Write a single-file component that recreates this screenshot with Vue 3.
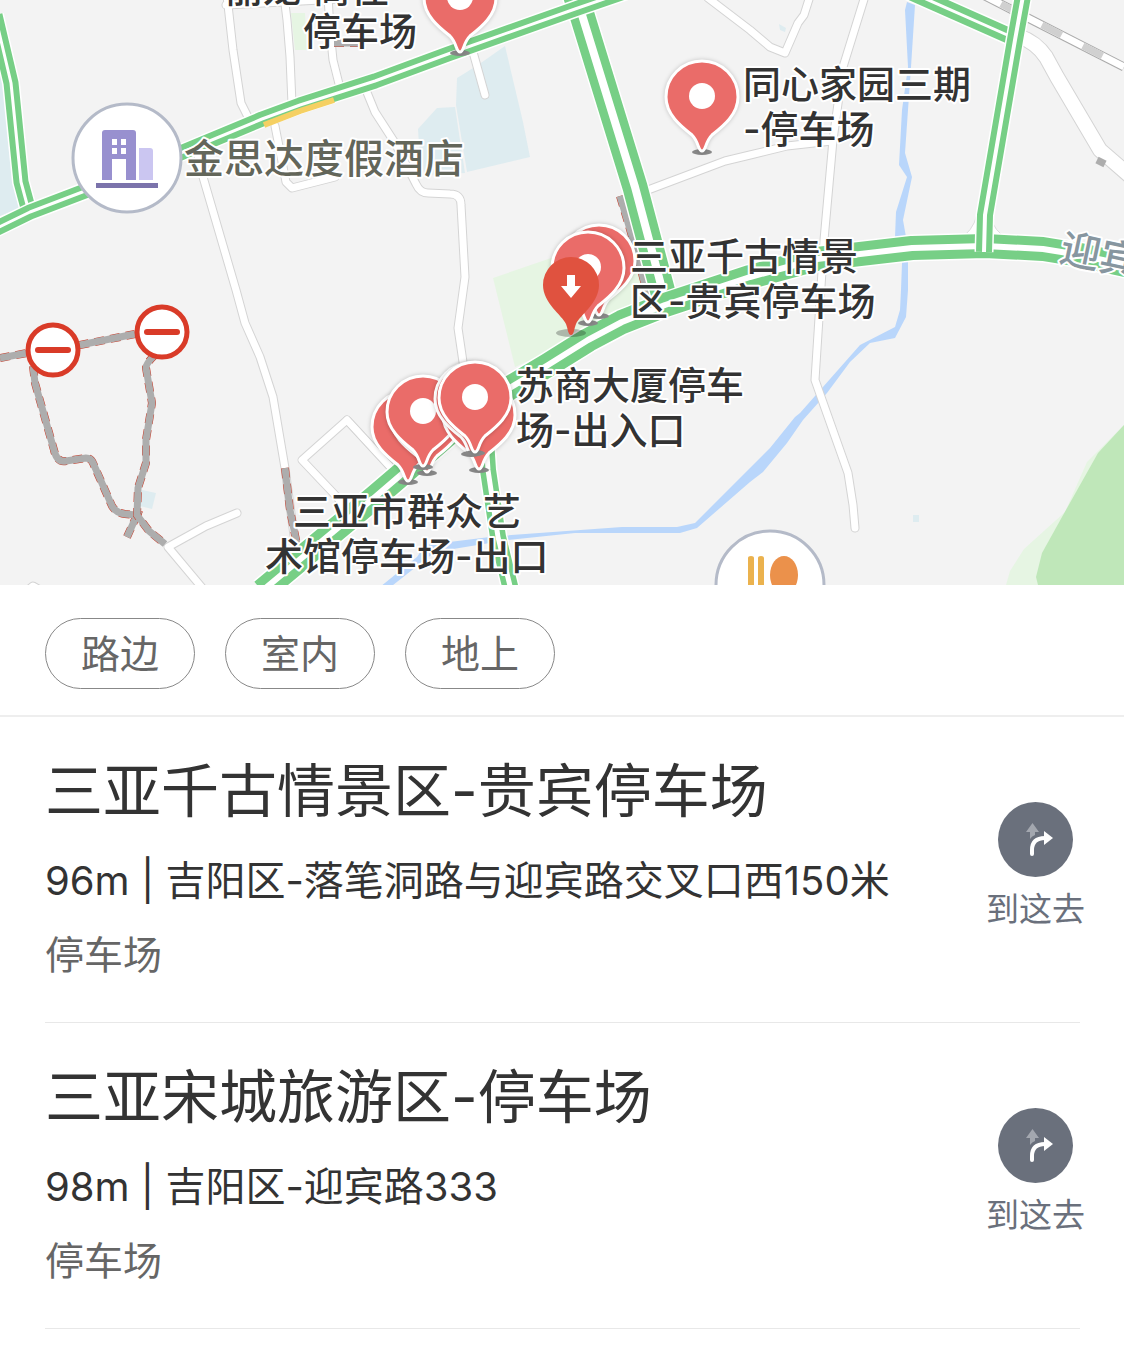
<template>
    <div class="page">
        <svg class="map" viewBox="0 0 1124 585" role="img" aria-label="停车场地图">
            <!-- land and water -->
            <path class="water" d="M0 60 8 90 22 208 0 216Z" />
            <path class="water" d="M505 46 523 122 530 157 467 172 456 105 457 78 478 65Z" />
            <path class="water" d="M455 107 437 108 418 129 420 160 425 175 465 173Z" />
            <path class="water" d="M142 490 156 493 152 509 140 506Z" />
            <path class="water" d="M779 24 786 28 785 32 780 30ZM913 515H919V522H913Z" />
            <path class="park" d="M291 13H305L307 50 295 50Z" />
            <path class="park" d="M493 278 560 255 640 235 660 300 515 367Z" />
            <path class="park" d="M1124 425 1087 462 1065 512 1024 549 1010 571 1006 585H1124Z" />
            <path class="forest" d="M1124 425 1098 453 1062 517 1042 553 1036 577 1038 585H1124Z" />
            <path class="river" :d="river" />

            <!-- streets -->
            <path v-for="d in streets" :key="'edge' + d" class="street-edge" :d="d" />
            <path class="street-edge wide" :d="eastStreet" />
            <path v-for="d in streets" :key="'fill' + d" class="street" :d="d" />
            <path class="street wide" :d="eastStreet" />
            <path class="slip" d="M964 236Q978 224 978 205L990 205Q988 224 1003 236Z" />

            <path class="rail-edge" d="M985 -4 1124 67" />
            <path class="rail" d="M985 -4 1124 67" />
            <path class="rail-dash" d="M1001 4 1124 67" />

            <g v-for="d in closedRoads" :key="d">
                <path class="closed-edge" :d="d" />
                <path class="closed" :d="d" />
            </g>
            <path class="closed" d="M1097 160 1105 164" />

            <!-- traffic roads -->
            <g v-for="road in roads" :key="road.d">
                <path class="line casing" :d="road.d" :stroke-width="road.width + 3" />
                <path class="line flow" :d="road.d" :stroke-width="road.width" />
                <path class="line median" :d="road.d" :stroke-width="road.gap" />
            </g>
            <path class="slow" d="M264 125 300 111 334 100" />

            <!-- closed road signs -->
            <g v-for="sign in signs" :key="sign.x" :transform="`translate(${sign.x} ${sign.y})`">
                <circle class="sign" r="25" />
                <path class="sign-bar" d="M-15 0H15" />
            </g>

            <!-- hotel -->
            <g>
                <circle class="poi" cx="127" cy="158" r="54" />
                <path fill="#9890cf" fill-rule="evenodd" d="M105 130H133Q136 130 136 133V180H126V159H112V180H102V133Q102 130 105 130ZM112 139H117V145H112ZM121 139H126V145H121ZM112 148H117V154H112ZM121 148H126V154H121Z" />
                <path fill="#cbc6f1" d="M139 148H150Q153 148 153 151V180H139Z" />
                <path fill="#7b73ab" d="M96 183H158V188H96Z" />
            </g>

            <!-- restaurant -->
            <g>
                <circle class="poi" cx="770" cy="585" r="54" />
                <path fill="#ebb24e" d="M748 558Q748 556 751 556T754 558V590H748ZM758 558Q758 556 761 556T764 558V590H758Z" />
                <ellipse fill="#eb914b" cx="784" cy="575" rx="14" ry="19" />
            </g>

            <!-- parking pins -->
            <g v-for="(pin, i) in pins" :key="i" :transform="`translate(${pin.x} ${pin.y})`">
                <ellipse class="pin-shadow" cy="56" rx="10" ry="3" />
                <path class="pin" d="M0 55C-4 55-3 46-10 39-20 31-36 19-36 1A36 36 0 0 1 36 1C36 19 20 31 10 39 3 46 4 55 0 55Z" />
                <circle fill="#fff" r="13" />
            </g>
            <g transform="translate(571 285)">
                <ellipse class="spot-shadow" cy="48" rx="15" ry="4" />
                <path fill="#e0523f" d="M0 50C-3 50-3 44-5 39-9 30-28 18-28 0A28 28 0 0 1 28 0C28 18 9 30 5 39 3 44 3 50 0 50Z" />
                <path fill="#fff" d="M-4-10H4V1H10L0 13-10 1H-4Z" />
            </g>

            <text v-for="label in labels" :key="label.text" class="label" :class="label.kind" :x="label.x" :y="label.y">{{ label.text }}</text>
            <text class="label road-name" transform="translate(1058 261) rotate(12)">迎宾路</text>
        </svg>

        <div class="filters">
            <button v-for="name in filters" :key="name" type="button" class="filter" :class="{ active: name === selected }" @click="toggle(name)">{{ name }}</button>
        </div>

        <ul class="list">
            <li v-for="lot in lots" :key="lot.name" class="lot">
                <div class="info">
                    <h2>{{ lot.name }}</h2>
                    <p class="address">{{ lot.distance }} | {{ lot.address }}</p>
                    <p class="type">停车场</p>
                </div>
                <button type="button" class="go">
                    <svg class="go-icon" viewBox="0 0 75 75" aria-hidden="true">
                        <circle cx="37.5" cy="37.5" r="37.5" fill="#6a707c" />
                        <path fill="#a3a7af" d="M34.500 21 41 30H37V33Q34 34 32 37V30H28Z" />
                        <path fill="none" stroke="#fff" stroke-width="4" stroke-linecap="round" d="M34 52V48Q34 36 47 36" />
                        <path fill="#fff" d="M46 29 55 36 46 43Z" />
                    </svg>
                    <span>到这去</span>
                </button>
            </li>
        </ul>
    </div>
</template>

<script setup>
import { ref } from 'vue'

const filters = ['路边', '室内', '地上']
const selected = ref('')

function toggle(name) {
    selected.value = selected.value === name ? '' : name
}

const lots = [
    { name: '三亚千古情景区-贵宾停车场', distance: '96m', address: '吉阳区-落笔洞路与迎宾路交叉口西150米' },
    { name: '三亚宋城旅游区-停车场', distance: '98m', address: '吉阳区-迎宾路333' },
]

const river = 'M907 2 905 10 908 67 902 110 899 165 907 177 896 212 895 237 902 263 901 290 900 310 895 327 860 345 800 413 795 417 770 448 750 468 695 523 677 527 622 527 498 536 425 545 417 557 380 587 388 589 435 552 508 540 575 533 680 533 697 528 750 482 763 472 787 443 803 420 827 393 850 362 870 343 895 338 906 317 908 290 908 263 906 237 903 220 912 177 905 153 911 67 915 5Z'

const streets = [
    'M226 5 340 -1',
    'M227 -4 233 50 241 103 252 125',
    'M284 -4 287 20 290 57 292 104',
    'M328 -4 330 30 333 60 340 88',
    'M275 126 286 182 292 188 335 177',
    'M198 155 203 177 236 290 245 323 260 357 273 397 285 468 295 543',
    'M366 90 375 112 395 143 416 184Q420 193 428 193L450 194Q461 194 461 205L465 277 458 328 463 362',
    'M473 52 485 95',
    'M640 193 725 161 750 155 787 146 832 141',
    'M708 -2 750 30 770 47 785 53 798 23 804 15 810 -4',
    'M865 -4 843 67 833 140 824 240 815 380 848 473 853 505 855 528',
    'M395 472 347 420 302 460 337 497 345 508',
    'M395 472 347 420',
    'M237 513 206 526 168 547 204 590',
    'M28 590 33 586 40 590',
]

const eastStreet = 'M1018 36Q1036 42 1046 57L1057 77 1100 150 1130 176'

const closedRoads = [
    'M0 358 27 353 80 345 135 334',
    'M33 366 35 383 54 450Q57 463 66 461L86 458Q91 458 93 463L112 506Q116 513 125 514L137 515 127 537',
    'M156 354Q146 363 146 368L152 403 146 440 146 463 138 488 137 515 149 531 165 544',
    'M285 468 290 510 297 545',
    'M620 196 632 236 648 296',
    'M334 43 358 43',
]

// width is the whole carriageway, gap the strip between both directions
const roads = [
    { width: 16, gap: 5, d: 'M486 440 488 470 498 537 511 590' },
    { width: 25, gap: 8, d: 'M572 -15 582 15 635 187 665 300' },
    { width: 24, gap: 6, d: 'M262 591 375 497 410 467 470 415 508 389 548 365 588 340 622 322 665 305 750 277 817 259 912 248 985 246 1043 249 1080 255 1130 266' },
    { width: 15, gap: 3, d: 'M-5 15 11 83 21 182 28 208' },
    { width: 15, gap: 3, d: 'M-5 229 30 212 85 191 183 152 262 119 300 105 375 81 448 54 575 9 630 -10' },
    { width: 16, gap: 3, d: 'M908 -9 1014 38' },
    { width: 16, gap: 4, d: 'M1023 -4 1015 40 985 215 984 252' },
]

const signs = [
    { x: 53, y: 350 },
    { x: 162, y: 332 },
]

const pins = [
    { x: 460, y: -3 },
    { x: 702, y: 96 },
    { x: 599, y: 260 },
    { x: 588, y: 267 },
    { x: 408, y: 426 },
    { x: 427, y: 417 },
    { x: 423, y: 411 },
    { x: 479, y: 414 },
    { x: 471, y: 398 },
    { x: 475, y: 397 },
]

const labels = [
    { text: '丽龙·商住', x: 225, y: 2 },
    { text: '停车场', x: 303, y: 45 },
    { text: '金思达度假酒店', x: 184, y: 173, kind: 'hotel' },
    { text: '同心家园三期', x: 743, y: 98 },
    { text: '-停车场', x: 743, y: 143 },
    { text: '三亚千古情景', x: 630, y: 270 },
    { text: '区-贵宾停车场', x: 630, y: 315 },
    { text: '苏商大厦停车', x: 516, y: 399 },
    { text: '场-出入口', x: 516, y: 444 },
    { text: '三亚市群众艺', x: 293, y: 525 },
    { text: '术馆停车场-出口', x: 265, y: 570 },
]
</script>

<style>
body {
    margin: 0;
    background: #fff;
}
</style>

<style scoped>
.page {
    min-height: 100vh;
    background: #fff;
    color: #333;
    font-family: Inter, "Noto Sans CJK SC", sans-serif;
}

.map {
    display: block;
    width: 100%;
    background: #f3f3f3;
}

.water {
    fill: #deecf0;
}

.park {
    fill: #e6f5e3;
}

.forest {
    fill: #bfe7b9;
}

.river {
    fill: #b9d6fb;
}

.street,
.street-edge {
    fill: none;
    stroke: #fff;
    stroke-width: 7;
    stroke-linecap: round;
    stroke-linejoin: round;
}

.street-edge {
    stroke: #d4d4d4;
    stroke-width: 9;
}

.street.wide {
    stroke-width: 14;
}

.street-edge.wide {
    stroke-width: 16;
}

.slip {
    fill: #fff;
    stroke: #dcdcdc;
}

.rail-edge,
.rail,
.rail-dash {
    fill: none;
    stroke: #aaa;
    stroke-width: 9;
}

.rail {
    stroke: #fff;
    stroke-width: 7;
}

.rail-dash {
    stroke: #d0d0d0;
    stroke-width: 7;
    stroke-dasharray: 22 24;
}

.closed,
.closed-edge {
    fill: none;
    stroke: #adadad;
    stroke-width: 7;
}

.closed-edge {
    stroke: #c8402e;
    stroke-width: 8;
    stroke-dasharray: 10 6;
}

.line {
    fill: none;
    stroke-linejoin: round;
}

.casing,
.median {
    stroke: #fff;
}

.flow {
    stroke: #77cf86;
}

.slow {
    fill: none;
    stroke: #f5d063;
    stroke-width: 6;
}

.sign {
    fill: #fff;
    stroke: #d93b28;
    stroke-width: 5;
}

.sign-bar {
    stroke: #d93b28;
    stroke-width: 6;
    stroke-linecap: round;
}

.poi {
    fill: #fff;
    stroke: #b4bac8;
    stroke-width: 3;
}

.pin {
    fill: #ea6c69;
    stroke: #fff;
    stroke-width: 3;
    filter: drop-shadow(0 0 2px rgba(0, 0, 0, 0.2));
}

.pin-shadow {
    fill: #888;
}

.spot-shadow {
    fill: rgba(0, 0, 0, 0.25);
}

.label {
    fill: #333;
    font-size: 38px;
    font-weight: 500;
    stroke: #fff;
    stroke-width: 4px;
    stroke-linejoin: round;
    paint-order: stroke;
}

.hotel {
    fill: #63665a;
    font-size: 40px;
}

.road-name {
    fill: #8796a0;
    font-size: 40px;
}

.filters {
    display: flex;
    gap: 30px;
    padding: 33px 45px 26px;
    border-bottom: 2px solid #eee;
}

.filter {
    width: 150px;
    height: 71px;
    padding: 0;
    border: 1px solid #888;
    border-radius: 36px;
    background: #fff;
    color: #666;
    font-family: inherit;
    font-size: 39px;
    line-height: 56px;
    cursor: pointer;
}

.filter.active {
    border-color: #333;
    color: #333;
}

.list {
    margin: 0;
    padding: 0 44px 0 45px;
    list-style: none;
}

.lot {
    display: flex;
    align-items: center;
    justify-content: space-between;
    padding: 34px 0 39px;
    border-bottom: 1px solid #e8e8e8;
}

h2 {
    margin: 0 0 22px;
    font-size: 58px;
    font-weight: 400;
    line-height: 80px;
}

p {
    margin: 0;
    font-size: 39px;
    line-height: 56px;
}

.address {
    margin-bottom: 18px;
    font-size: 40px;
}

.type {
    color: #666;
}

.go {
    display: flex;
    flex-direction: column;
    align-items: center;
    gap: 8px;
    flex: none;
    margin-right: -5px;
    padding: 0;
    border: 0;
    background: none;
    color: #6a707c;
    font-family: inherit;
    font-size: 33px;
    line-height: 48px;
    cursor: pointer;
}

.go-icon {
    width: 75px;
    height: 75px;
}
</style>
